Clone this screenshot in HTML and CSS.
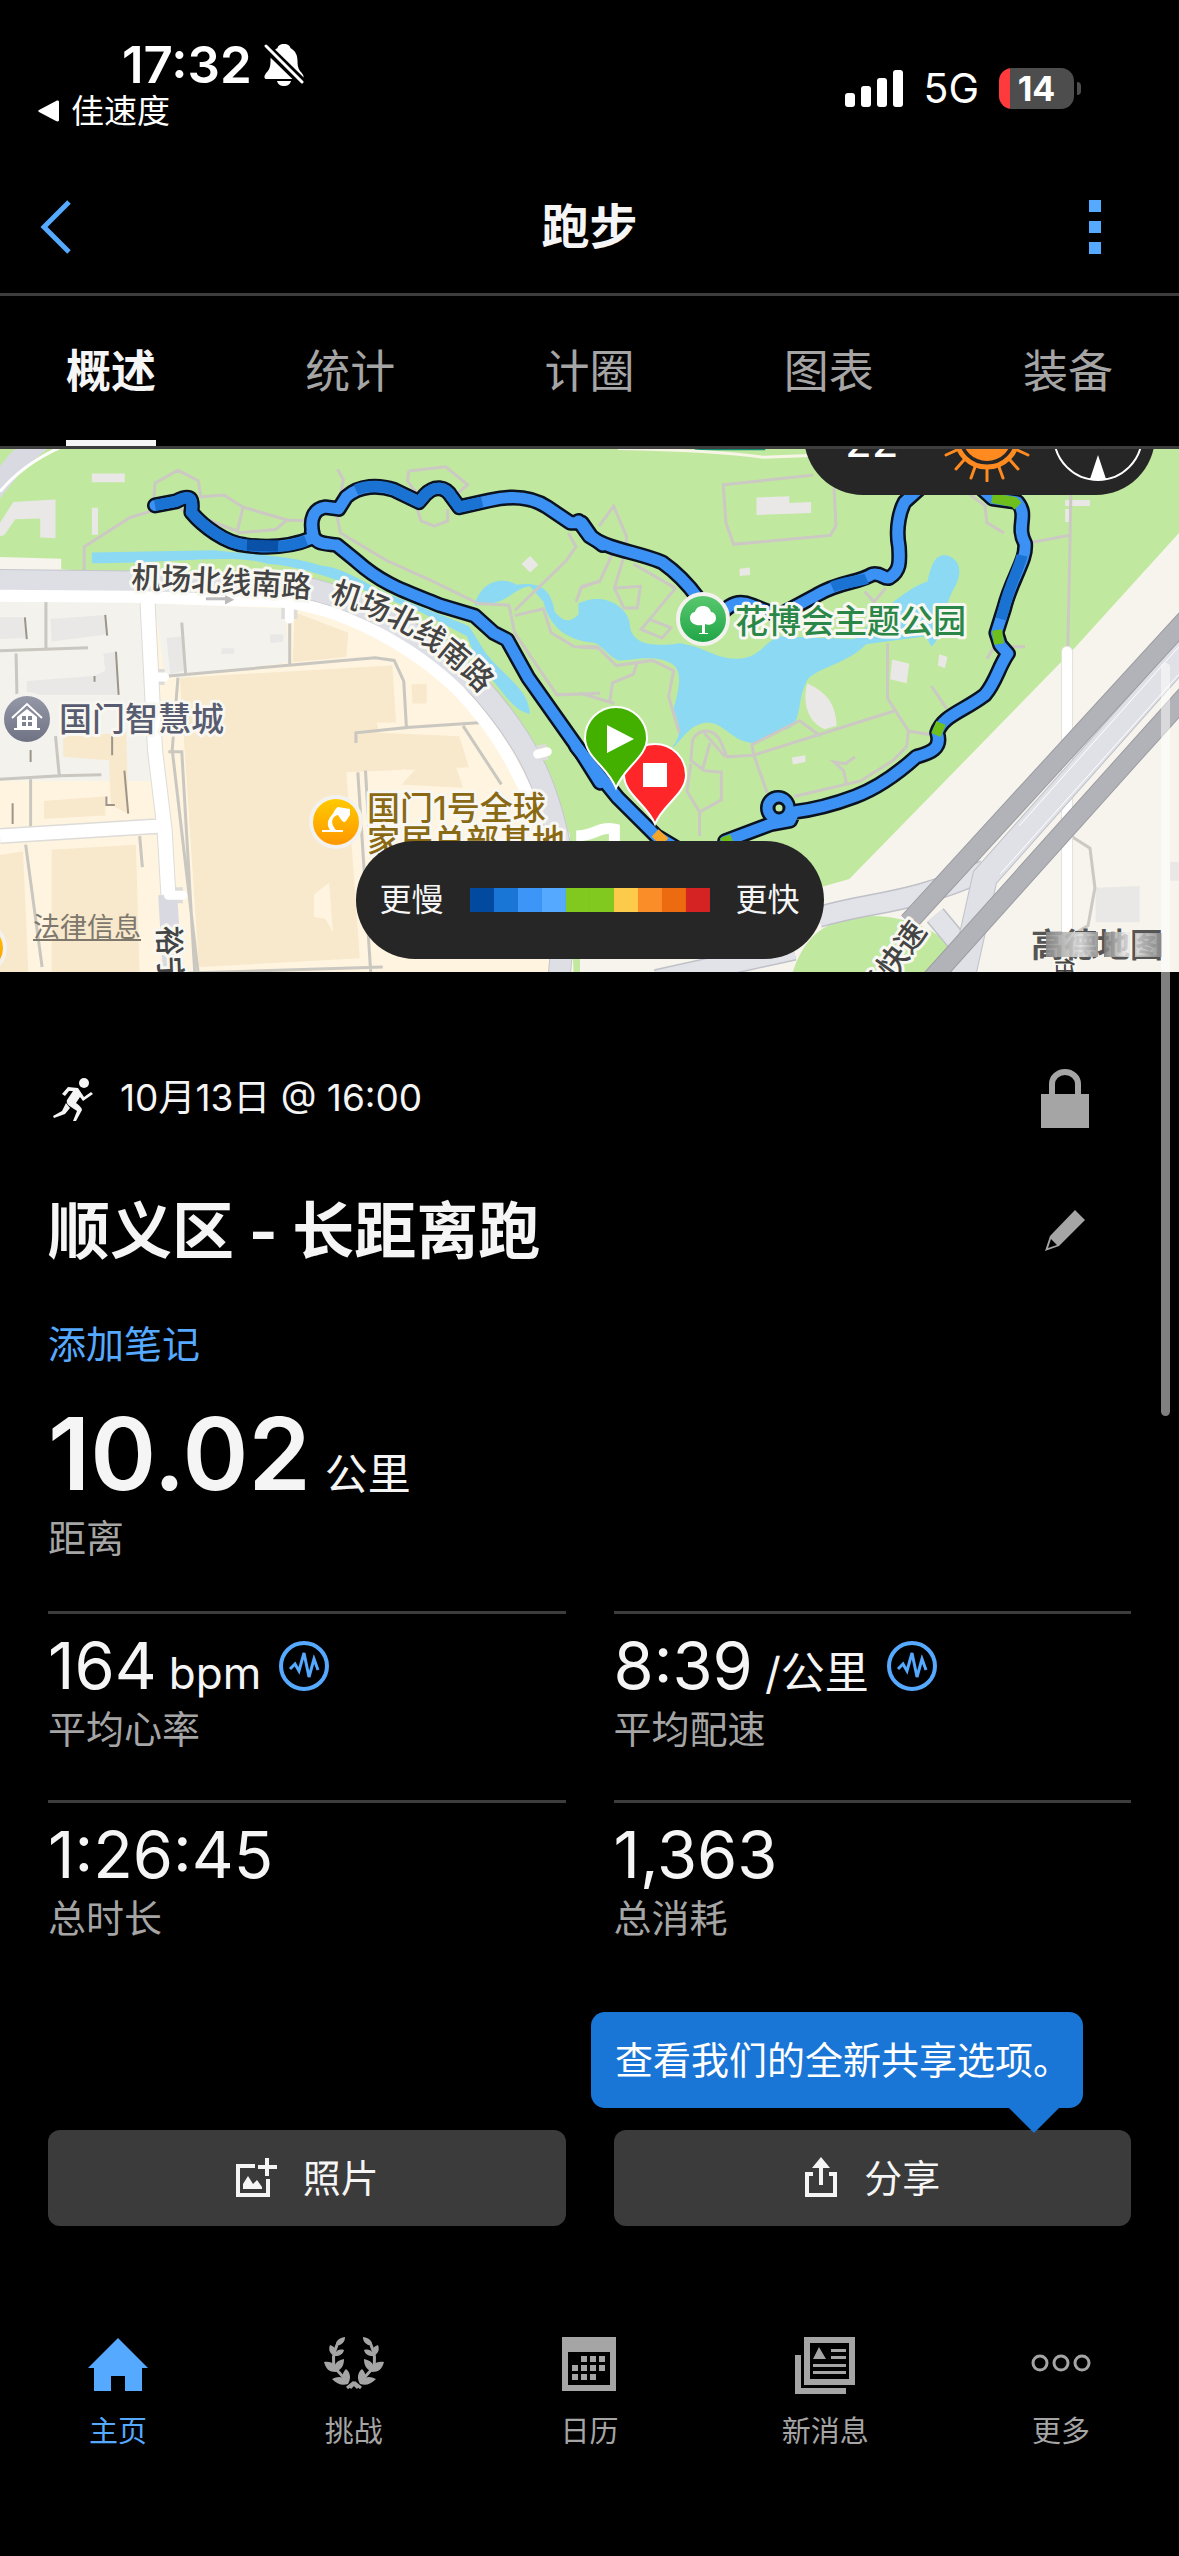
FILE: index.html
```
<!DOCTYPE html>
<html lang="zh-CN">
<head>
  <meta charset="UTF-8" />
  <meta name="viewport" content="width=device-width, initial-scale=1" />
  <title>跑步</title>
  <link rel="stylesheet" href="styles.css">
</head>
<body>
  <!-- Status bar -->
  <div class="status">
    <div class="status-left">
      <div class="clock">
        <span>17:32</span>
        <svg width="40" height="44" viewBox="0 0 40 44">
          <path d="M20 1c-4 0-6 2-6.500 4C8 8 6.500 13 6.500 18c0 8-2 9-5 13-2 3-1 5 1 5h35c2 0 3-2 1-5-3-4-5-5-5-13 0-6-2-10-7-13C26 3 24 1 20 1zM13 38c1 4 4 5 7 5s6-1 7-5z" fill="#fff"/>
          <path d="M1 3l38 37" stroke="#000" stroke-width="9"/>
          <path d="M2 3l36 36" stroke="#fff" stroke-width="3" stroke-linecap="round"/>
        </svg>
      </div>
      <a class="back-app" href="#">
        <svg width="21" height="22" viewBox="0 0 21 22"><path d="M1 10L18 1c2-1 3 0 3 1v18c0 1-1 2-3 1L1 12c-1-1-1-1 0-2z" fill="#fff"/></svg>
        佳速度
      </a>
    </div>
    <div class="status-right">
      <svg width="58" height="38" viewBox="0 0 58 38" fill="#fff">
        <rect y="24" width="10" height="14" rx="3"/><rect x="16" y="17" width="10" height="21" rx="3"/>
        <rect x="32" y="9" width="10" height="29" rx="3"/><rect x="48" y="1" width="10" height="37" rx="3"/>
      </svg>
      <span class="network">5G</span>
      <span class="battery">14</span>
    </div>
  </div>

  <header class="header">
    <button class="icon-btn" aria-label="返回">
      <svg width="32" height="54" viewBox="0 0 32 54"><path d="M29 2L4 27l25 25" fill="none" stroke="#55a9ff" stroke-width="5"/></svg>
    </button>
    <h1>跑步</h1>
    <button class="icon-btn" aria-label="菜单">
      <svg width="12" height="54" viewBox="0 0 12 54" fill="#55a9ff"><path d="M0 0h12v12H0zM0 21h12v12H0zM0 42h12v12H0z"/></svg>
    </button>
  </header>

  <nav class="tabs">
    <button class="tab active">概述</button>
    <button class="tab">统计</button>
    <button class="tab">计圈</button>
    <button class="tab">图表</button>
    <button class="tab">装备</button>
  </nav>

  <main class="content">
    <section class="map">
      <svg class="map-canvas" viewBox="0 0 1179 523" preserveAspectRatio="xMidYMid slice">
        <defs>
          <linearGradient id="gray" x2="0" y2="1"><stop stop-color="#9699a8"/><stop offset="1" stop-color="#6e7182"/></linearGradient>
          <linearGradient id="orange" x2="0" y2="1"><stop stop-color="#ffcc00"/><stop offset="1" stop-color="#ff9500"/></linearGradient>
          <linearGradient id="green" x2="0" y2="1"><stop stop-color="#5cc970"/><stop offset="1" stop-color="#1ea446"/></linearGradient>
          <linearGradient id="smudge"><stop stop-color="#888" stop-opacity=".9"/><stop offset=".3" stop-color="#ddd" stop-opacity=".9"/><stop offset=".5" stop-color="#777" stop-opacity=".9"/><stop offset=".7" stop-color="#eee" stop-opacity=".8"/><stop offset="1" stop-color="#888" stop-opacity=".9"/></linearGradient>
          <path id="road-a" d="M131 139Q220 142 312 149"/>
          <path id="road-b" d="M329 152Q425 180 484 249"/>
          <path id="route-l" d="M405 190L460 178C500 155 505 170 500 210C530 250 590 300 640 305C700 315 760 310 815 285M818 275C808 230 820 200 850 195L885 200L905 165C940 130 990 130 1030 145L1095 180L1110 160C1135 130 1165 135 1180 165L1200 195L1280 175C1340 160 1390 165 1430 195L1490 240L1520 240L1545 280L1575 305M815 265C820 305 850 300 880 305L930 350C1000 420 1060 440 1150 480L1240 510L1290 560L1325 580L1380 690L1520 910L1568 995"/>
          <path id="route-r" d="M-4 235L25 280C80 320 150 325 215 355C260 390 290 430 310 460L360 520C390 470 420 465 450 480L520 510L620 450C680 410 730 415 765 390C790 385 795 405 810 400C840 380 837 350 835 310C825 250 840 200 850 180L900 130L1040 130L1080 170L1145 180C1175 220 1140 250 1165 300C1170 350 1130 400 1110 490L1090 560L1100 595L1120 620C1095 660 1090 700 1060 740C1000 790 950 800 935 850C950 900 910 910 880 920C830 970 780 1010 720 1035C660 1060 600 1075 560 1080L550 1105L500 1115L380 1165M-10 890L100 1040L200 1150L260 1190"/>
        </defs>
        <rect width="1179" height="523" fill="#f6f4ec"/>
        <rect x="570" width="609" height="523" fill="#c1e89f"/>

        <!-- west half: city blocks -->
        <g transform="translate(0 -9) scale(.3827 .3444)">
          <path d="M0 0H1600V1568H1380L1490 1150 1400 900 1280 700 1130 570 950 460 820 410 345 390 160 375 160 345 0 340Z" fill="#c1e89f"/>
          <path d="M0 560V1568H1500L1480 1150 1300 750 1100 560 760 460H400V990H0Z" fill="#fef4e0"/>
          <path d="M0 460H370L390 990 150 985V860L290 800 300 990 0 985ZM405 475L745 490 755 645 470 690 430 680Z" fill="#f3f2ec"/>
          <g fill="#f8e8cc">
            <path d="M470 690L1025 655 1035 820 985 820 990 850 1200 860 1225 950 905 965 940 1505 520 1530ZM770 500L910 560 905 630 765 645ZM770 855L860 845 930 880V950L835 965 800 920 770 915ZM1075 710L1115 708V765H1078ZM135 1190L355 1175 365 1568H135ZM0 1205L60 1195 75 1568H0ZM115 1048L275 1035V1090L115 1100ZM165 860L330 850 335 1085 290 1060 285 930 165 920ZM1050 1000L1090 950 1190 945 1210 1010Z"/>
          </g>
          <path d="M820 1320L860 1285 870 1430 850 1390 820 1385ZM965 970L1060 955 1040 1010 970 1010Z" fill="#fef4e0"/>
          <g fill="#e9e8e6">
            <path d="M0 515L65 515 70 575 0 578ZM132 520L275 508 278 565 135 585ZM240 97H326V123H240ZM0 240L35 180 145 173V285L105 283V228L40 230 12 275 0 280ZM240 197H256V275H240ZM270 620L305 615 312 740 70 740 70 700 245 685 275 670ZM435 575L480 570V670L445 680ZM580 605H612V620L578 622ZM705 565H740V585L707 590ZM1385 337L1407 362 1385 385 1363 360Z"/>
          </g>
          <path d="M240 327L560 320C640 330 760 335 840 365C900 370 960 420 1010 445L1225 540 1270 620C1320 690 1380 720 1385 795C1340 790 1310 720 1250 650L1220 570 1100 500C940 430 800 365 700 360C620 330 480 355 240 358Z" fill="#8bd9f2"/>
          <path d="M1240 480C1260 400 1320 400 1350 420C1420 410 1440 440 1450 500C1500 560 1500 490 1575 465V590C1500 590 1440 560 1420 470L1385 425C1340 430 1330 480 1240 480Z" fill="#8bd9f2"/>
          <g class="lines" stroke="#ccc8c4" stroke-width="3">
            <path d="M220 380V310L340 225 400 205 405 125 465 88 518 118 525 165 585 160 635 195 750 232 810 235M635 195L620 265 470 200M620 270L720 260 750 232M882 85L897 115 880 220 890 270 1010 350 1130 410 1250 475 1330 480 1345 560 1455 740 1568 735M1068 90L1165 78 1222 130 1190 160M1068 90L1065 120 1090 155M1090 200L1100 235 1135 250 1170 235V200M1345 495L1480 350 1505 310 1485 270M1345 510L1420 490 1440 560 1500 600 1568 605M1568 410L1520 425 1505 470"/>
          </g>
          <g class="lines" stroke="#c9c7c0" stroke-width="3">
            <path d="M120 470V605M0 612L230 603M42 620L45 780M145 860L155 975 0 985M80 985V1130M155 975L265 972M475 530L485 680M440 685L980 632 1030 640 1055 700 1062 835 930 850V880M757 530V650M1062 835L1260 820M1210 830L1310 1000M465 690L450 900 520 1568M440 905H475L480 1000 510 1568M935 965L970 1568M955 960L965 1150M67 1175L110 1530M365 1150L372 1240M0 1565L1000 1530"/>
          </g>
          <g class="lines" stroke="#9d958a" stroke-width="2">
            <path d="M65 515L70 578M275 508L280 568M303 615L310 740M247 685V702M33 1055V1115M278 1035V1060L300 1060M325 960L335 1085M293 860V915M80 900V935"/>
          </g>
          <g class="lines">
            <path d="M0 205L90 80 200 -20" stroke="#d9dae1" stroke-width="20" transform="translate(-45 -20)"/>
            <path d="M0 150Q60 70 160 20" stroke="#fff" stroke-width="3"/>
            <path d="M0 408L345 412 820 435C950 470 1100 560 1250 715C1400 900 1440 1040 1470 1220C1480 1350 1470 1460 1460 1568" stroke="#c5c6cd" stroke-width="23"/>
            <path d="M0 408L345 412 820 435C950 470 1100 560 1250 715C1400 900 1440 1040 1470 1220C1480 1350 1470 1460 1460 1568" stroke="#dedfe5" stroke-width="21"/>
            <path d="M385 460L405 900 430 1130 440 1320M0 1150L430 1120M756 480V520M400 688H430M440 1322H478M1405 910L1430 905" stroke="#dddcd8" stroke-width="16"/>
            <path d="M385 460L405 900 430 1130 440 1320" stroke="#fff" stroke-width="14"/>
            <path d="M0 1150L430 1120" stroke="#fff" stroke-width="13"/>
            <path d="M438 1320L452 1568" stroke="#d9dae1" stroke-width="19"/>
            <path d="M0 452L345 455 740 470C900 490 1080 600 1200 730C1310 860 1350 960 1400 1080" stroke="#fff" stroke-width="12"/>
            <path d="M756 480V520M400 688H430M440 1322H478M1405 912L1430 905" stroke="#fff" stroke-width="9" stroke-linecap="round"/>
            <path d="M538 461H600" stroke="#bbb" stroke-width="3"/>
          </g>
          <path d="M588 450L612 464 588 478Z" fill="#bbb"/>
        </g>

        <!-- east half: lake and expressway -->
        <g transform="translate(580 -9) scale(.382 .3444)">
          <path d="M1568 270L1290 610 1255 650 705 1275 625 1300 0 1500V1568H1568Z" fill="#f6f4ec"/>
          <path d="M550 1568C580 1460 620 1400 730 1385C830 1370 940 1420 975 1480L920 1568Z" fill="#c1e89f"/>
          <path d="M300 25H485V30H300Z" fill="#0e8a70"/>
          <path d="M100 25Q350 30 480 50L600 45" class="lines" stroke="#f7f5e6" stroke-width="3"/>
          <path d="M-4 475C60 440 120 480 130 530C130 600 200 600 260 590C330 600 350 635 410 635C470 635 480 590 520 570L760 580C700 660 600 660 590 710C570 750 580 830 540 840C500 850 480 880 450 880C390 870 380 820 330 820C280 830 270 870 240 895C270 850 260 830 245 780C260 720 270 670 240 650C200 620 140 640 100 640C60 620 60 580 -4 580Z" fill="#8bd9f2"/>
          <path d="M700 600C800 480 860 430 910 410C920 360 930 330 960 335C1000 350 1000 390 980 430C950 480 960 560 920 600L905 570Z" fill="#8bd9f2"/>
          <g fill="#e9e8e6">
            <path d="M462 167L548 163V183L605 180V212L462 218ZM418 374L445 370V392L418 395ZM817 637L862 650 855 706 812 695ZM940 622L962 630 955 663 937 655ZM595 707C640 730 670 760 672 830L640 840C600 820 580 770 595 707ZM555 922L590 915V935L557 942ZM1270 174H1335V192H1270ZM1270 200H1288V238H1270ZM1350 1300L1465 1295V1400H1350ZM1545 1225H1568V1280H1545Z"/>
          </g>
          <g class="lines" stroke="#ccc8c4" stroke-width="3">
            <path d="M610 102L375 130 382 240 402 303 655 277 670 250 665 140M50 250L88 192 122 280 120 320 90 430 115 488H150L158 425 95 430M50 415L85 330M0 430L50 410M250 430L160 550 215 575 238 545 180 520M250 430L140 360M0 600L45 600 95 655 190 640 245 670 232 745 260 850M150 645L140 680 85 705 78 760M0 735L90 765M805 590V750L860 845 915 855M860 845L855 890 820 930 735 990 560 1035M822 787L455 915 385 920 370 880C350 830 310 840 295 870L290 930 325 960 370 965M455 915L450 885 575 815 630 860M455 915L490 1025M370 960V1045L313 1080 280 1020 290 940M313 1080V1150M325 850L380 920M340 880L320 960M698 1000L690 960 665 935 695 940 720 920M920 715L960 780M1060 190L1065 240 1110 270M1185 297L1280 277M1285 160L1277 610M1010 150L1065 195M1285 1150L1335 1185 1348 1300 1330 1410 1285 1440M745 440L770 470 800 430M1065 635L1085 600M1110 600H1165"/>
          </g>
          <g class="lines">
            <path d="M1275 615V1450" stroke="#e3e1da" stroke-width="12" stroke-linecap="round"/>
            <path d="M1275 615V1450" stroke="#fff" stroke-width="10" stroke-linecap="round"/>
            <path d="M625 1385C760 1340 860 1350 1060 1250M930 1380L990 1460M200 1568L560 1480" stroke="#bfc0c8" stroke-width="22"/>
            <path d="M625 1385C760 1340 860 1350 1060 1250M930 1380L990 1460M200 1568L560 1480" stroke="#e2e3e8" stroke-width="19"/>
            <path d="M1620 570L1060 1270 1000 1568" stroke="#c0c1c9" stroke-width="26"/>
            <path d="M1620 570L1060 1270 1000 1568" stroke="#e0e1e7" stroke-width="24"/>
            <path d="M1620 480L860 1400M1620 700L900 1590" stroke="#9c9ca2" stroke-width="20"/>
            <path d="M1620 480L860 1400M1620 700L900 1590" stroke="#b2b3b9" stroke-width="18"/>
            <path d="M1568 680L1100 1260M1568 600L1150 1120" stroke="#fff" stroke-width="1"/>
          </g>
          <path d="M-10 1150C40 1150 50 1120 90 1130L90 1180" class="lines" stroke="#fff" stroke-width="11"/>
        </g>

        <!-- recorded route -->
        <g class="lines" stroke="#0b1220" stroke-width="16" stroke-linecap="round" stroke-linejoin="round">
          <use href="#route-l" transform="translate(0 -9) scale(.3827 .3444)"/>
          <use href="#route-r" transform="translate(580 -9) scale(.382 .3444)"/>
          <circle cx="778" cy="359" r="10"/>
        </g>
        <g class="lines" stroke="#3b92f4" stroke-width="11" stroke-linecap="round" stroke-linejoin="round">
          <use href="#route-l" transform="translate(0 -9) scale(.3827 .3444)"/>
          <use href="#route-r" transform="translate(580 -9) scale(.382 .3444)"/>
          <circle cx="778" cy="359" r="10"/>
        </g>
        <circle cx="779" cy="359" r="5" fill="#c1e89f" stroke="#0b1220" stroke-width="3"/>
        <g class="lines" stroke="#1a72d2" stroke-width="11" stroke-linejoin="round">
          <path transform="translate(0 -9) scale(.3827 .3444)" d="M405 190L460 178C500 155 505 170 500 210C530 250 590 300 640 305C700 315 760 310 800 292M930 145C960 130 1000 132 1030 145L1095 180L1110 160C1135 130 1165 135 1180 165L1200 195L1260 180"/>
          <path transform="translate(580 -9) scale(.382 .3444)" d="M660 427C690 412 730 412 750 402M1157 335C1150 370 1125 420 1112 480L1102 520"/>
        </g>
        <path d="M247 96L278 97" class="lines" stroke="#0a51a8" stroke-width="11"/>
        <g class="lines" stroke="#6fbf1c" stroke-width="10">
          <path d="M992 49L1014 53 1018 57M997 181L999 195M941 274L936 286M722 394L732 390"/>
        </g>
        <path d="M655 384L665 393" stroke="#f5a52a" stroke-width="10"/>

        <!-- start and finish pins -->
        <g stroke="#fff" stroke-width="2">
          <path d="M655 375C647 355 624 345 624 326A31 31 0 0 1 686 326C686 345 663 355 655 375Z" fill="#ff2629"/>
          <path d="M616 339C608 318 585 308 585 289A31 31 0 0 1 647 289C647 308 624 318 616 339Z" fill="#43b000"/>
        </g>
        <path d="M643 314H667V338H643ZM607 276L634 290 607 304Z" fill="#fff"/>

        <!-- places -->
        <g stroke="#f3f2ee" stroke-width="4">
          <circle cx="27" cy="270" r="25" fill="url(#gray)"/>
          <circle cx="336" cy="373" r="25" fill="url(#orange)"/>
          <circle cx="703" cy="170" r="25" fill="url(#green)"/>
          <circle cx="-20" cy="499" r="25" fill="url(#orange)"/>
        </g>
        <path d="M12 269L27 255 42 269" fill="none" stroke="#fff" stroke-width="2"/>
        <path d="M17 268L27 260 37 268V279H40V281H14V279H17ZM22 267V271H26V267ZM28 267V271H32V267ZM22 273V277H26V273ZM28 273V277H32V273Z" fill="#fff" fill-rule="evenodd"/>
        <path d="M322 383H343V381H336C329 373 333 367 338 366C341 370 343 375 346 372L350 366V360L338 358C334 360 335 363 331 367C327 372 327 377 330 381H322Z" fill="#fff"/>
        <path d="M702 184V176C697 177 690 175 690 169C690 165 693 163 695 163C696 159 699 157 703 157C707 157 710 159 711 163C714 163 716 166 716 169C716 175 709 177 705 175V184H708V185H699V184Z" fill="#fff"/>
        <g class="labels">
          <text class="road"><textPath href="#road-a">机场北线南路</textPath></text>
          <text class="road"><textPath href="#road-b">机场北线南路</textPath></text>
          <text class="road" transform="translate(158 477) rotate(88)">裕宁路</text>
          <text class="road" transform="translate(875 555) rotate(-54)">场快速</text>
          <text class="small" transform="translate(1057 509) rotate(90)">任</text>
          <text x="59" y="282" fill="#585c70">国门智慧城</text>
          <text x="367" y="371" fill="#8a6914">国门1号全球</text>
          <text x="367" y="404" fill="#8a6914">家居总部基地</text>
          <text x="735" y="184" fill="#2a8748">花博会主题公园</text>
        </g>
        <text class="watermark" x="1031" y="508">高德地图</text>
        <path d="M1046 483H1098V508H1046ZM1104 483H1130V508H1104ZM1135 484H1162V508H1135Z" fill="url(#smudge)"/>
      </svg>
      <a class="legal" href="#">法律信息</a>

      <div class="weather">
        <span>22</span>
        <svg width="92" height="92" viewBox="-46 -46 92 92">
          <circle r="25" fill="#ff8a1f"/>
          <circle r="31" fill="none" stroke="#ff8a1f" stroke-width="5"/>
          <path d="M0 33V45M12 31L16 42M23 24L31 33M30 14L41 19M-12 31L-16 42M-23 24L-31 33M-30 14L-41 19" stroke="#ff8a1f" stroke-width="3" stroke-linecap="round"/>
        </svg>
        <svg width="92" height="92" viewBox="-46 -46 92 92">
          <circle r="44" fill="none" stroke="#fff" stroke-width="2"/>
          <path d="M0 19L8 43H-8Z" fill="#fff"/>
        </svg>
      </div>

      <div class="legend">
        <span>更慢</span>
        <div class="scale"><i class="c1"></i><i class="c2"></i><i class="c3"></i><i class="c4"></i><i class="c5"></i><i class="c5"></i><i class="c6"></i><i class="c7"></i><i class="c8"></i><i class="c9"></i></div>
        <span>更快</span>
      </div>
    </section>

    <section class="details">
      <div class="row">
        <div class="date">
          <svg width="48" height="48" viewBox="0 0 48 48" fill="#f5f5f5">
            <circle cx="36" cy="9" r="5"/>
            <path d="M30 14L20 13 14 20 17 22 21 17 25 17 19 26C18 29 20 31 23 33L29 37 25 47H28L34 36C34 34 32 32 28 29L32 23 35 27 45 20 43 18 36 23ZM18 29L14 37 5 42 6 44 17 40 22 34Z"/>
          </svg>
          <span>10月13日 @ 16:00</span>
        </div>
        <button class="icon-btn" aria-label="隐私">
          <svg width="48" height="60" viewBox="0 0 48 60"><path d="M11 28V16a13 12 0 0 1 26 0V28" fill="none" stroke="#a5a5a5" stroke-width="6"/><path d="M0 26H48V60H0Z" fill="#a5a5a5"/></svg>
        </button>
      </div>
      <div class="row title-row">
        <h2>顺义区 - 长距离跑</h2>
        <button class="icon-btn" aria-label="编辑">
          <svg width="48" height="48" viewBox="0 0 48 48" fill="#a5a5a5"><path d="M34 2L44 12 18 38 4 43 9 28ZM10 31L7 40 16 37Z" fill-rule="evenodd"/></svg>
        </button>
      </div>
      <a class="add-note" href="#">添加笔记</a>

      <div class="distance"><strong>10.02</strong><span>公里</span></div>
      <div class="label">距离</div>

      <div class="stats">
        <div class="stat">
          <div class="value">164 <small>bpm</small>
            <svg width="50" height="50" viewBox="0 0 50 50" fill="none" stroke="#55a9ff"><circle cx="25" cy="25" r="23" stroke-width="4"/><path d="M11 28L16 23 20 30 25 12 30 36 35 18 39 29" stroke-width="3"/></svg>
          </div>
          <div class="label">平均心率</div>
        </div>
        <div class="stat">
          <div class="value">8:39 <small>/公里</small>
            <svg width="50" height="50" viewBox="0 0 50 50" fill="none" stroke="#55a9ff"><circle cx="25" cy="25" r="23" stroke-width="4"/><path d="M11 28L16 23 20 30 25 12 30 36 35 18 39 29" stroke-width="3"/></svg>
          </div>
          <div class="label">平均配速</div>
        </div>
        <div class="stat">
          <div class="value">1:26:45</div>
          <div class="label">总时长</div>
        </div>
        <div class="stat">
          <div class="value">1,363</div>
          <div class="label">总消耗</div>
        </div>
      </div>

      <div class="actions">
        <button class="action">
          <svg width="42" height="42" viewBox="0 0 42 42"><path d="M20 9H3V38H33V22" fill="none" stroke="#f5f5f5" stroke-width="4"/><path d="M30 1h4v7h8v4h-8v7h-4v-7h-7V8h7zM8 32V27L13 19 18 27 22 23 27 30V32Z" fill="#f5f5f5"/></svg>
          照片
        </button>
        <button class="action">
          <svg width="34" height="42" viewBox="0 0 34 42"><path d="M9 17H3V38H31V17H25M17 28V6" fill="none" stroke="#f5f5f5" stroke-width="4"/><path d="M17 0L26 11H8Z" fill="#f5f5f5"/></svg>
          分享
        </button>
        <div class="tooltip">查看我们的全新共享选项。</div>
      </div>
    </section>
    <div class="scrollbar"></div>
  </main>

  <nav class="bottom-nav">
    <a class="active" href="#">
      <svg width="60" height="60" viewBox="0 0 60 60" fill="currentColor"><path d="M30 4L60 34H54V57H37V42H23V57H6V34H0Z"/></svg>
      主页
    </a>
    <a href="#">
      <svg width="60" height="60" viewBox="0 0 60 60" fill="currentColor">
        <g id="branch"><path d="M21 3C14 4 11 8 12 12C18 11 21 8 21 3ZM6 11C4 16 6 20 11 22C16 22 19 20 20 16C16 15 13 16 12 18C12 14 9 12 6 11ZM0 28C2 35 5 38 12 38C18 35 20 31 20 25C15 26 12 28 11 31C8 28 4 27 0 28ZM8 45C13 50 18 52 24 50C27 45 27 39 22 35C19 38 18 41 19 44C16 42 12 43 8 45Z"/><path d="M13 11Q7 24 11 34L21 45M23 54L29 49 34 54" fill="none" stroke="currentColor" stroke-width="3"/></g>
        <use href="#branch" transform="translate(60 0) scale(-1 1)"/>
      </svg>
      挑战
    </a>
    <a href="#">
      <svg width="60" height="60" viewBox="0 0 60 60" fill="currentColor"><path d="M3 3H57V57H3ZM9 18V51H51V18Z" fill-rule="evenodd"/><path d="M22 22h6v6h-6zM31 22h6v6h-6zM40 22h6v6h-6zM13 31h6v6h-6zM22 31h6v6h-6zM31 31h6v6h-6zM40 31h6v6h-6zM13 40h6v6h-6zM22 40h6v6h-6zM31 40h6v6h-6z"/></svg>
      日历
    </a>
    <a href="#">
      <svg width="60" height="60" viewBox="0 0 60 60" fill="currentColor"><path d="M9 3H60V51H9ZM15 9V45H54V9Z" fill-rule="evenodd"/><path d="M0 21H6V54H51V60H0ZM18 25L24 13 31 25ZM36 15H51V18H36ZM36 22H51V25H36ZM18 30H51V33H18ZM18 37H51V40H18Z"/></svg>
      新消息
    </a>
    <a href="#">
      <svg width="60" height="60" viewBox="0 0 60 60" fill="none" stroke="currentColor" stroke-width="3"><circle cx="9" cy="29" r="7"/><circle cx="30" cy="29" r="7"/><circle cx="51" cy="29" r="7"/></svg>
      更多
    </a>
  </nav>
</body>
</html>
```
FILE: styles.css
```
* {
  box-sizing: border-box;
}
body {
  margin: 0;
  min-height: 100vh;
  display: flex;
  flex-direction: column;
  background-color: #000;
  color: #f5f5f5;
  font-family: Inter, "Noto Sans CJK SC", sans-serif;
  font-size: 38px;
  line-height: 48px;
}
button {
  border: 0;
  padding: 0;
  background: none;
  color: inherit;
  font: inherit;
}
a {
  color: inherit;
  text-decoration: none;
}
h1, h2 {
  margin: 0;
}
svg {
  display: block;
  flex: none;
}

/* Status bar */
.status {
  display: flex;
  justify-content: space-between;
  height: 160px;
  padding: 40px 105px 0 38px;
  color: #fff;
}
.clock {
  display: flex;
  align-items: center;
  gap: 12px;
  height: 50px;
  padding-left: 84px;
  font-size: 51px;
  font-weight: 600;
}
.back-app {
  display: flex;
  align-items: center;
  gap: 12px;
  height: 42px;
  font-size: 33px;
}
.status-right {
  display: flex;
  align-items: center;
  gap: 20px;
  height: 96px;
}
.network {
  font-size: 41px;
}
.battery {
  position: relative;
  width: 75px;
  height: 41px;
  border-radius: 13px;
  background: linear-gradient(to right, #ff3a3c 11px, #4d4d4d 11px);
  font-size: 34px;
  font-weight: 700;
  line-height: 41px;
  text-align: center;
}
.battery::after {
  content: "";
  position: absolute;
  right: -7px;
  top: 14px;
  width: 4px;
  height: 13px;
  border-radius: 0 6px 6px 0;
  background-color: #4d4d4d;
}

/* Header */
.header {
  display: flex;
  justify-content: space-between;
  align-items: center;
  height: 136px;
  padding: 0 78px 0 40px;
  border-bottom: 3px solid #3d3d3d;
}
.header h1 {
  padding-left: 18px;
  font-size: 48px;
  font-weight: 700;
}
.tabs {
  display: flex;
  justify-content: space-between;
  height: 153px;
  padding: 0 66px;
  border-bottom: 3px solid #3d3d3d;
}
.tab {
  padding-top: 8px;
  border-bottom: 6px solid transparent;
  color: #a5a5a5;
  font-size: 45px;
}
.tab.active {
  border-color: #f5f5f5;
  color: #f5f5f5;
  font-weight: 700;
}

/* Map */
.content {
  position: relative;
}
.map {
  position: relative;
  height: 523px;
  overflow: hidden;
}
.map-canvas {
  width: 100%;
  height: 100%;
}
.lines {
  fill: none;
}
.lines path, path.lines, .lines use, #route-l, #route-r {
  vector-effect: non-scaling-stroke;
}
.labels text {
  font-size: 33px;
  font-weight: 500;
  stroke: #f8f7f1;
  stroke-width: 6px;
  stroke-linejoin: round;
  paint-order: stroke;
}
.labels .road {
  font-size: 30px;
  fill: #444;
}
.labels .small {
  font-size: 20px;
  fill: #444;
}
.watermark {
  font-size: 33px;
  font-weight: 700;
  fill: #555;
}
.legal {
  position: absolute;
  left: 33px;
  bottom: 20px;
  color: #7d776c;
  font-size: 27px;
  text-decoration: underline;
}
.weather {
  position: absolute;
  top: -72px;
  right: 24px;
  display: flex;
  align-items: center;
  gap: 19px;
  width: 351px;
  height: 118px;
  padding: 0 11px 0 41px;
  border-radius: 59px;
  background-color: #262626;
  color: #fff;
}
.weather span {
  flex: 1;
  padding-top: 10px;
  font-size: 44px;
}
.legend {
  position: absolute;
  left: 50%;
  bottom: 13px;
  display: flex;
  align-items: center;
  gap: 26px;
  height: 118px;
  padding: 0 24px;
  border-radius: 59px;
  background-color: #262626;
  font-size: 32px;
  white-space: nowrap;
  transform: translateX(-50%);
}
.scale {
  display: flex;
  height: 24px;
}
.scale i {
  width: 24px;
}
.c1 { background-color: #024a9f; }
.c2 { background-color: #1a76d6; }
.c3 { background-color: #3d95f7; }
.c4 { background-color: #55a9ff; }
.c5 { background-color: #81c91f; }
.c6 { background-color: #fccb4b; }
.c7 { background-color: #fb8d28; }
.c8 { background-color: #ec6a10; }
.c9 { background-color: #d52323; }

/* Activity details */
.details {
  padding: 96px 48px 0;
}
.row {
  display: flex;
  justify-content: space-between;
  align-items: center;
  height: 60px;
  padding-right: 42px;
}
.date {
  display: flex;
  align-items: center;
  gap: 24px;
  font-size: 37px;
}
.title-row {
  height: 76px;
  margin: 66px 0 50px;
}
.title-row h2 {
  font-size: 62px;
  font-weight: 700;
  line-height: 76px;
}
.add-note {
  display: block;
  color: #55a9ff;
}
.distance {
  display: flex;
  align-items: baseline;
  gap: 14px;
  height: 100px;
  margin: 36px 0 10px;
  font-size: 43px;
  line-height: 100px;
}
.distance strong {
  font-size: 100px;
  font-weight: 600;
}
.label {
  color: #a5a5a5;
}
.stats {
  display: grid;
  grid-template-columns: 1fr 1fr;
  column-gap: 48px;
  margin-top: 49px;
}
.stat {
  height: 189px;
  padding-top: 17px;
  border-top: 3px solid #3d3d3d;
}
.value {
  display: flex;
  align-items: baseline;
  gap: 12px;
  height: 70px;
  margin-bottom: 4px;
  font-size: 65px;
  line-height: 70px;
}
.value small {
  font-size: 44px;
}
.value svg {
  align-self: center;
  margin-left: 6px;
}
.actions {
  position: relative;
  display: grid;
  grid-template-columns: 1fr 1fr;
  column-gap: 48px;
  margin-top: 141px;
}
.action {
  display: flex;
  justify-content: center;
  align-items: center;
  gap: 26px;
  height: 96px;
  border-radius: 12px;
  background-color: #3b3b3b;
}
.tooltip {
  position: absolute;
  right: 48px;
  bottom: 118px;
  padding: 24px 12px 24px 24px;
  border-radius: 14px;
  background-color: #1a76d6;
  color: #fff;
  white-space: nowrap;
}
.tooltip::after {
  content: "";
  position: absolute;
  right: 24px;
  top: 100%;
  border: 25px solid transparent;
  border-top-color: #1a76d6;
  border-bottom: 0;
}
.scrollbar {
  position: absolute;
  top: 214px;
  right: 9px;
  width: 9px;
  height: 753px;
  border-radius: 5px;
  background-color: rgba(255, 255, 255, 0.5);
}

/* Bottom navigation */
.bottom-nav {
  display: grid;
  grid-template-columns: repeat(5, 1fr);
  margin-top: auto;
  padding: 0 0 106px;
  color: #a5a5a5;
  font-size: 29px;
  line-height: 36px;
}
.bottom-nav a {
  display: flex;
  flex-direction: column;
  align-items: center;
  gap: 20px;
}
.bottom-nav .active {
  color: #55a9ff;
}
```
